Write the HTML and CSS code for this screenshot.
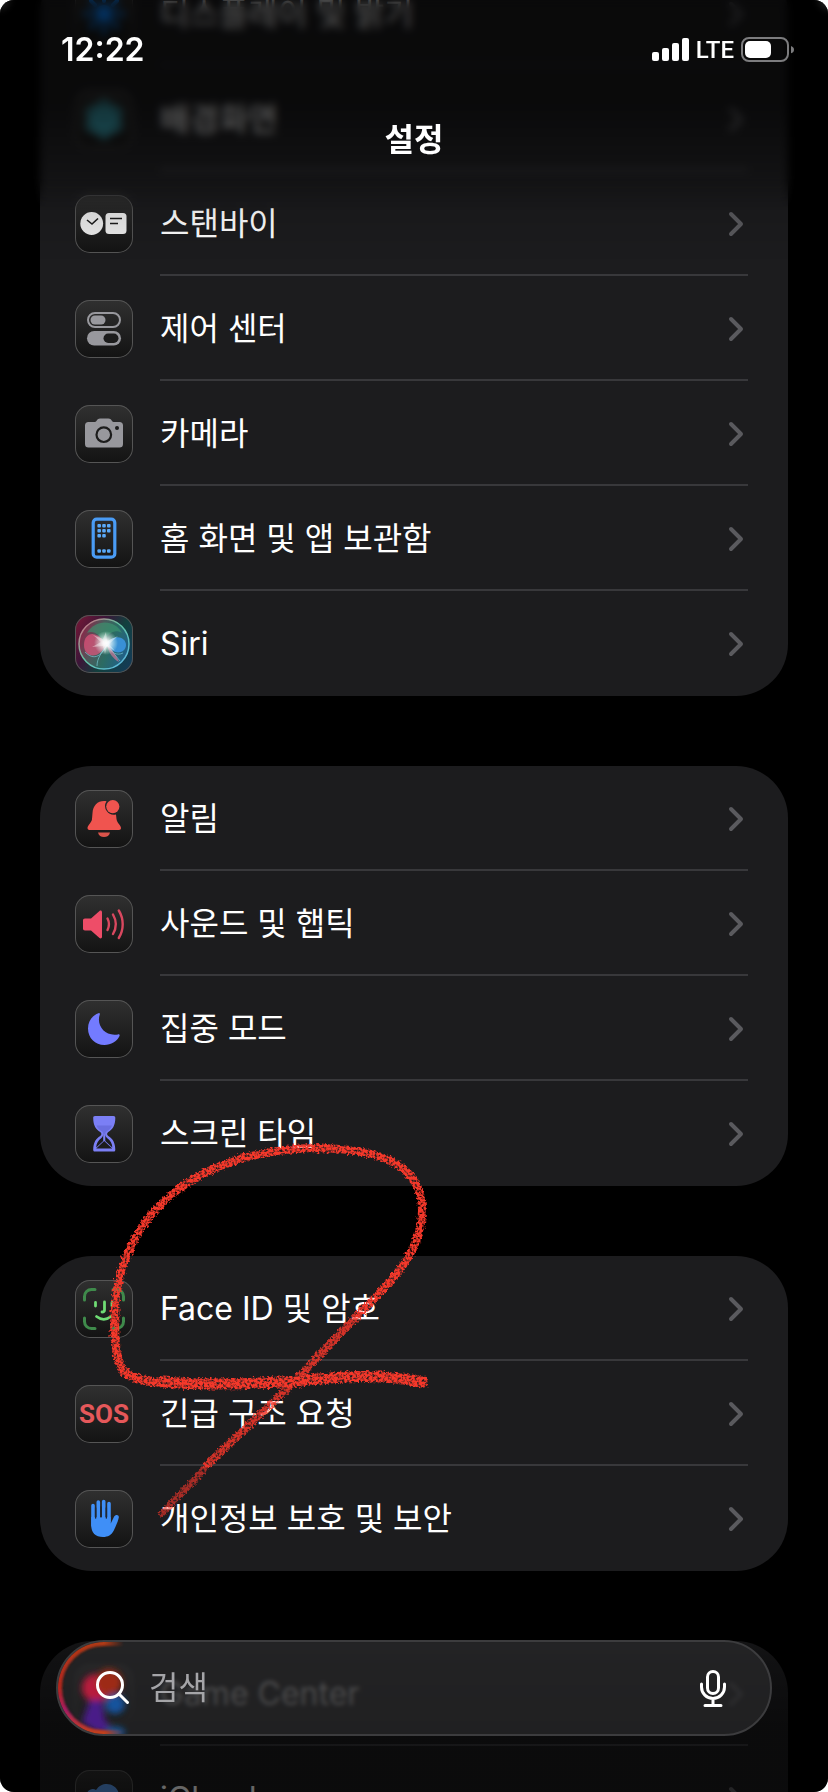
FILE: index.html
```html
<!DOCTYPE html>
<html lang="ko">

<head>
    <meta charset="UTF-8">
    <meta name="viewport" content="width=device-width, initial-scale=1">
    <title>설정</title>
    <link rel="stylesheet" href="styles.css">
</head>

<body>
    <div class="phone">
        <main class="list">
            <nav class="group">
                <a class="row" href="#display">
                    <svg class="icon" viewBox="0 0 58 58">
                        <circle cx="29" cy="29" r="9" fill="#0a84ff" />
                        <path d="M29 10v6M29 42v6M10 29h6M42 29h6M16 16l4 4M38 38l4 4M16 42l4-4M38 20l4-4" stroke="#0a84ff" stroke-width="4" stroke-linecap="round" />
                    </svg>
                    <span class="label">디스플레이 및 밝기</span>
                    <svg class="chevron" viewBox="0 0 18 28"><path d="M4 4l10 10L4 24" /></svg>
                </a>
                <a class="row" href="#wallpaper">
                    <svg class="icon" viewBox="0 0 58 58">
                        <g fill="#2fa8bd" fill-opacity="0.6" stroke="#5fd6e8" stroke-width="1">
                            <circle cx="29" cy="17" r="7" />
                            <circle cx="29" cy="41" r="7" />
                            <circle cx="18.500" cy="23" r="7" />
                            <circle cx="39.500" cy="23" r="7" />
                            <circle cx="18.500" cy="35" r="7" />
                            <circle cx="39.500" cy="35" r="7" />
                            <circle cx="29" cy="29" r="7" />
                        </g>
                    </svg>
                    <span class="label">배경화면</span>
                    <svg class="chevron" viewBox="0 0 18 28"><path d="M4 4l10 10L4 24" /></svg>
                </a>
                <a class="row" href="#standby">
                    <svg class="icon" viewBox="0 0 58 58">
                        <circle cx="16.700" cy="28.500" r="11.400" fill="#ececec" />
                        <path d="M12 25l5 4 6-5.500" fill="none" stroke="#1c1c1c" stroke-width="1.600" />
                        <rect x="30.500" y="18" width="21" height="21" rx="3.500" fill="#ececec" />
                        <path d="M35 23.500h12M35 28.500h8" stroke="#1c1c1c" stroke-width="1.600" />
                    </svg>
                    <span class="label">스탠바이</span>
                    <svg class="chevron" viewBox="0 0 18 28"><path d="M4 4l10 10L4 24" /></svg>
                </a>
                <a class="row" href="#control">
                    <svg class="icon" viewBox="0 0 58 58">
                        <rect x="13" y="13" width="32" height="14" rx="7" fill="none" stroke="#98989d" stroke-width="2" />
                        <rect x="15.500" y="15.500" width="15" height="9" rx="4.500" fill="#98989d" />
                        <rect x="12" y="31" width="34" height="14.500" rx="7.200" fill="#98989d" />
                        <rect x="28.500" y="33.500" width="15" height="9.500" rx="4.700" fill="#1c1c1c" />
                    </svg>
                    <span class="label">제어 센터</span>
                    <svg class="chevron" viewBox="0 0 18 28"><path d="M4 4l10 10L4 24" /></svg>
                </a>
                <a class="row" href="#camera">
                    <svg class="icon" viewBox="0 0 58 58">
                        <path d="M13.500 17H20c1.500 0 2-3.500 5-3.500h8.500c3 0 3.500 3.500 5 3.500H44.500a3.500 3.500 0 0 1 3.500 3.500v18.500a3.500 3.500 0 0 1-3.500 3.500h-31a3.500 3.500 0 0 1-3.500-3.500V20.500a3.500 3.500 0 0 1 3.500-3.500z" fill="#98989d" />
                        <circle cx="28.800" cy="29.700" r="7.300" fill="none" stroke="#1c1c1c" stroke-width="2.200" />
                        <circle cx="42" cy="23" r="2" fill="#1c1c1c" />
                    </svg>
                    <span class="label">카메라</span>
                    <svg class="chevron" viewBox="0 0 18 28"><path d="M4 4l10 10L4 24" /></svg>
                </a>
                <a class="row" href="#home">
                    <svg class="icon" viewBox="0 0 58 58">
                        <rect x="18.200" y="9.200" width="21.600" height="38" rx="3.500" fill="none" stroke="#4a9cf5" stroke-width="3.200" />
                        <g fill="#5aa9f8">
                            <rect x="22.400" y="14" width="3.600" height="3.600" rx="1" />
                            <rect x="27.200" y="14" width="3.600" height="3.600" rx="1" />
                            <rect x="32" y="14" width="3.600" height="3.600" rx="1" />
                            <rect x="22.400" y="19" width="3.600" height="3.600" rx="1" />
                            <rect x="27.200" y="19" width="3.600" height="3.600" rx="1" />
                            <rect x="32" y="19" width="3.600" height="3.600" rx="1" />
                            <rect x="22.400" y="24" width="3.600" height="3.600" rx="1" />
                            <rect x="27.200" y="24" width="3.600" height="3.600" rx="1" />
                            <rect x="22.400" y="39.200" width="3.600" height="3.600" rx="1" />
                            <rect x="27.200" y="39.200" width="3.600" height="3.600" rx="1" />
                            <rect x="32" y="39.200" width="3.600" height="3.600" rx="1" />
                        </g>
                    </svg>
                    <span class="label">홈 화면 및 앱 보관함</span>
                    <svg class="chevron" viewBox="0 0 18 28"><path d="M4 4l10 10L4 24" /></svg>
                </a>
                <a class="row" href="#siri">
                    <svg class="icon siri" viewBox="0 0 58 58">
                        <defs>
                            <linearGradient id="orb" x1="0" y1="0.300" x2="1" y2="0.700">
                                <stop offset="0" stop-color="#8d2448" />
                                <stop offset="0.350" stop-color="#4c5a5c" />
                                <stop offset="0.600" stop-color="#2c6b62" />
                                <stop offset="1" stop-color="#1f5f8e" />
                            </linearGradient>
                            <linearGradient id="rim" x1="0" y1="0" x2="1" y2="1">
                                <stop offset="0" stop-color="#e0607e" />
                                <stop offset="0.450" stop-color="#63c4a2" />
                                <stop offset="1" stop-color="#5ab4e8" />
                            </linearGradient>
                            <radialGradient id="glow">
                                <stop offset="0" stop-color="#ffffff" />
                                <stop offset="0.250" stop-color="#ffffff" stop-opacity="0.900" />
                                <stop offset="1" stop-color="#d8fff4" stop-opacity="0" />
                            </radialGradient>
                        </defs>
                        <circle cx="29" cy="29" r="25" fill="url(#orb)" stroke="url(#rim)" stroke-width="1.500" />
                        <path d="M12 18C20 4 40 4 47 18c-8-5-15 2-19 9-3-7-9-12-16-9z" fill="#3c9a72" opacity="0.600" />
                        <path d="M31 30C22 14 9 17 9 30s15 15 22 0z" fill="#f0557f" opacity="0.650" />
                        <path d="M31 29c8-11 20-7 20 1s-12 12-20-1z" fill="#3f9bee" opacity="0.800" />
                        <path d="M10 37c12 12 19-2 22-7 4 8 10 11 16 8M22 51c0-8 5-14 10-21l13 16" fill="none" stroke="#84d5e8" stroke-width="1" opacity="0.600" />
                        <path d="M32 29c4 5 10 12 12 18-6-3-11-10-12-18z" fill="#e77c9c" opacity="0.600" />
                        <circle cx="31" cy="28" r="12" fill="url(#glow)" />
                        <path d="M31 17l1 9 11-5-9 8 6 7-8-5-2 8-2-8-11 1 9-5-8-7 10 4z" fill="#ffffff" opacity="0.400" />
                    </svg>
                    <span class="label">Siri</span>
                    <svg class="chevron" viewBox="0 0 18 28"><path d="M4 4l10 10L4 24" /></svg>
                </a>
            </nav>

            <nav class="group">
                <a class="row" href="#notifications">
                    <svg class="icon" viewBox="0 0 58 58">
                        <path d="M29 11c-6.500 0-11 4.500-11.500 12l-.500 6c0 3-4.500 6.500-4.500 9 0 1.300.800 2 2 2h29.500c1.300 0 2-.800 2-2 0-2.500-4-5-4.500-9l-.500-4.500a8.800 8.800 0 0 1-9.500-13.300c-.800-.200-1.500-.200-2.500-.200z" fill="#f0544f" />
                        <circle cx="37.800" cy="16.600" r="6.600" fill="#f0544f" />
                        <path d="M23 42.500h12c-.500 3-3 4.500-6 4.500s-5.500-1.500-6-4.500z" fill="#d9534a" />
                    </svg>
                    <span class="label">알림</span>
                    <svg class="chevron" viewBox="0 0 18 28"><path d="M4 4l10 10L4 24" /></svg>
                </a>
                <a class="row" href="#sounds">
                    <svg class="icon" viewBox="0 0 58 58">
                        <path d="M10 23.500h6L24.500 16c1-.900 2.500-.400 2.500 1.200v24.600c0 1.600-1.500 2.100-2.500 1.200L16 35.500h-6c-1.300 0-2-.800-2-2v-8c0-1.200.700-2 2-2z" fill="#ee4d68" />
                        <path d="M32.500 23.500c1.800 3.500 1.800 8 0 11.500M38 19.500c3.500 6 3.500 13.500 0 19.500M43.800 15.500c5.200 8.500 5.200 19 0 27.500" fill="none" stroke="#d9485f" stroke-width="2.400" stroke-linecap="round" />
                    </svg>
                    <span class="label">사운드 및 햅틱</span>
                    <svg class="chevron" viewBox="0 0 18 28"><path d="M4 4l10 10L4 24" /></svg>
                </a>
                <a class="row" href="#focus">
                    <svg class="icon" viewBox="0 0 58 58">
                        <path d="M23.500 13.200c.900-.400 1.700.300 1.300 1.200-3.800 11 5.200 22.500 18.200 20 1.200-.200 2 .500 1.500 1.600C42 41.500 36 45 29.500 45 20 45 13 38 13 28.500c0-7 4-13 10.500-15.300z" fill="#737bff" />
                    </svg>
                    <span class="label">집중 모드</span>
                    <svg class="chevron" viewBox="0 0 18 28"><path d="M4 4l10 10L4 24" /></svg>
                </a>
                <a class="row" href="#screentime">
                    <svg class="icon" viewBox="0 0 58 58">
                        <path d="M20 11h18.500c1.200 0 1.800.700 1.800 1.900 0 7.500-2.800 11.500-7 14-1.600 1-1.600 3 0 4 4.200 2.500 7 6.500 7 13.800 0 1.200-.600 1.900-1.800 1.900H20c-1.200 0-1.800-.700-1.800-1.900 0-7.300 2.800-11.300 7-13.800 1.600-1 1.600-3 0-4-4.200-2.500-7-6.500-7-14 0-1.200.600-1.900 1.800-1.900z" fill="#7b7ff5" />
                        <path d="M21.500 20.500h15.500c-.800 2.200-2.200 4-4.500 5.200-1.700.900-2.200 2-2.200 3.500h-2c0-1.500-.500-2.600-2.200-3.500-2.300-1.200-3.800-3-4.600-5.200z" fill="#6a6ee0" />
                        <path d="M28.200 28.500v7.500l-7 6.500c0-4 2-7 5-9.300 1.500-1.200 2-2.700 2-4.700zM30.300 28.500v7.500l7 6.500c0-4-2-7-5-9.300-1.500-1.200-2-2.700-2-4.700z" fill="#1c1c1c" />
                        <path d="M29.200 36l8 7.500h-16z" fill="#1c1c1c" />
                    </svg>
                    <span class="label">스크린 타임</span>
                    <svg class="chevron" viewBox="0 0 18 28"><path d="M4 4l10 10L4 24" /></svg>
                </a>
            </nav>

            <nav class="group">
                <a class="row" href="#faceid">
                    <svg class="icon" viewBox="0 0 58 58">
                        <path d="M9.500 20v-3.500a7 7 0 0 1 7-7H20M38 9.500h3.500a7 7 0 0 1 7 7V20M48.500 38v3.500a7 7 0 0 1-7 7H38M20 48.500h-3.500a7 7 0 0 1-7-7V38" fill="none" stroke="#3f8a4b" stroke-width="3" stroke-linecap="round" />
                        <path d="M20.500 22.500v3.500M37 22.500v3.500M29.500 22v8c0 1.300-.800 2-2.500 2M21.500 36.500c4.500 3.500 10 3.500 14.500 0" fill="none" stroke="#6fdc74" stroke-width="2.800" stroke-linecap="round" />
                    </svg>
                    <span class="label">Face ID 및 암호</span>
                    <svg class="chevron" viewBox="0 0 18 28"><path d="M4 4l10 10L4 24" /></svg>
                </a>
                <a class="row" href="#sos">
                    <span class="icon sos">SOS</span>
                    <span class="label">긴급 구조 요청</span>
                    <svg class="chevron" viewBox="0 0 18 28"><path d="M4 4l10 10L4 24" /></svg>
                </a>
                <a class="row" href="#privacy">
                    <svg class="icon" viewBox="0 0 58 58">
                        <path d="M18 15.500v20M23.300 12v18M28.700 11.500v18M34 13.500v18" stroke="#3f8ff7" stroke-width="3.600" stroke-linecap="round" />
                        <path d="M16.200 27h19.500v6.500c1-1.500 2.300-4.500 3.300-6.700 1.600-2.800 5.300-2 4.800.700-.800 4-3 8.500-5 13C36.500 45 33 47 28 47c-7.500 0-11.800-4-11.800-12z" fill="#3f8ff7" />
                        <path d="M20.650 18v10M26 17v10M31.350 18v10" stroke="#1e2735" stroke-width="1.400" stroke-linecap="round" />
                    </svg>
                    <span class="label">개인정보 보호 및 보안</span>
                    <svg class="chevron" viewBox="0 0 18 28"><path d="M4 4l10 10L4 24" /></svg>
                </a>
            </nav>

            <nav class="group">
                <a class="row" href="#gamecenter">
                    <svg class="icon" viewBox="0 0 58 58"></svg>
                    <span class="label">Game Center</span>
                    <svg class="chevron" viewBox="0 0 18 28"><path d="M4 4l10 10L4 24" /></svg>
                </a>
                <a class="row" href="#icloud">
                    <svg class="icon" viewBox="0 0 58 58">
                        <path d="M14 44a10 10 0 0 1-3-19c2-6 7-7 10-5 7-11 23-6 23 6 9 4 7 18-4 18z" fill="#5a9cf0" />
                    </svg>
                    <span class="label">iCloud</span>
                    <svg class="chevron" viewBox="0 0 18 28"><path d="M4 4l10 10L4 24" /></svg>
                </a>
            </nav>
        </main>

        <header class="header">
            <div class="status">
                <time class="clock">12:22</time>
                <div class="signals">
                    <svg class="bars" viewBox="0 0 37 24">
                        <rect x="0" y="14" width="7" height="9" rx="2" />
                        <rect x="10" y="10" width="7" height="13" rx="2" />
                        <rect x="20" y="5" width="7" height="18" rx="2" />
                        <rect x="30" y="0" width="7" height="23" rx="2" />
                    </svg>
                    <span class="carrier">LTE</span>
                    <svg class="battery" viewBox="0 0 54 26">
                        <rect x="1" y="1" width="46" height="23" rx="7" fill="none" stroke="#7c7c7e" stroke-width="2" />
                        <rect x="4" y="4" width="26" height="17" rx="5" fill="#ffffff" />
                        <path d="M50 9c2 .700 3 2 3 3.700s-1 3-3 3.600z" fill="#7c7c7e" />
                    </svg>
                </div>
            </div>
            <h1 class="title">설정</h1>
        </header>

        <footer class="footer">
            <form class="search" role="search">
                <svg class="refraction" viewBox="0 0 80 96">
                    <defs>
                        <linearGradient id="edge" x1="0" y1="0" x2="0" y2="1">
                            <stop offset="0" stop-color="#b03a18" />
                            <stop offset="0.500" stop-color="#b3261e" />
                            <stop offset="0.750" stop-color="#a81d63" />
                            <stop offset="1" stop-color="#c2401c" />
                        </linearGradient>
                        <linearGradient id="fade">
                            <stop offset="0.600" stop-color="#ffffff" />
                            <stop offset="0.850" stop-color="#ffffff" stop-opacity="0" />
                        </linearGradient>
                        <mask id="edgeMask"><rect width="80" height="96" fill="url(#fade)" /></mask>
                        <filter id="soft" x="-50%" y="-50%" width="200%" height="200%"><feGaussianBlur stdDeviation="3" /></filter>
                        <filter id="softEdge"><feGaussianBlur stdDeviation="1" /></filter>
                    </defs>
                    <g filter="url(#soft)">
                        <circle cx="40" cy="48" r="14" fill="#b81c3c" />
                        <circle cx="53" cy="42" r="13" fill="#9d2a12" />
                        <circle cx="59" cy="64" r="10" fill="#14529c" />
                        <path d="M34 60h12l3 20 10 12H40L26 82z" fill="#4a1a88" />
                        <ellipse cx="59" cy="92" rx="10" ry="5" fill="#16589e" />
                    </g>
                    <g mask="url(#edgeMask)">
                        <path d="M70 3H48a45 45 0 0 0 0 90h22" fill="none" stroke="url(#edge)" stroke-width="6" filter="url(#softEdge)" />
                    </g>
                </svg>
                <svg class="glass" viewBox="0 0 36 36">
                    <circle cx="15" cy="15" r="12.500" />
                    <path d="M24 24l8.500 8.500" />
                </svg>
                <input class="field" type="search" placeholder="검색" aria-label="검색">
                <button class="mic" type="button" aria-label="받아쓰기">
                    <svg viewBox="0 0 28 40">
                        <rect x="8.500" y="3.500" width="11" height="22" rx="5.500" />
                        <path d="M2.500 16v3a11.500 11.500 0 0 0 23 0v-3M14 31v6M6 37.500h16" />
                    </svg>
                </button>
            </form>
        </footer>

        <!-- red crayon stroke around Face ID -->
        <svg class="scribble" viewBox="0 0 330 390" aria-hidden="true">
            <defs>
                <filter id="crayon" x="-10%" y="-10%" width="120%" height="120%">
                    <feTurbulence type="fractalNoise" baseFrequency="0.400" numOctaves="3" seed="4" result="noise" />
                    <feDisplacementMap in="SourceGraphic" in2="noise" scale="6" xChannelSelector="R" yChannelSelector="G" result="rough" />
                    <feColorMatrix in="noise" type="matrix" values="0 0 0 0 0  0 0 0 0 0  0 0 0 0 0  0 0 3 0 -0.600" result="grain" />
                    <feComposite in="rough" in2="grain" operator="in" result="chalk" />
                    <feGaussianBlur in="chalk" stdDeviation="0.400" />
                </filter>
            </defs>
            <g filter="url(#crayon)" fill="none" stroke="#f5372c" stroke-linecap="round">
                <path d="M62 373C82 352 96 340 107 325" stroke-width="7" opacity="0.650" />
                <path d="M107 325L188 248L260 173" stroke-width="8" opacity="0.850" />
                <path d="M260 173C290 143 322 113 322 70C322 30 290 8 213 8C140 10 90 35 60 65C30 95 16 135 15 170" stroke-width="8" />
                <path d="M15 170C14 195 15 225 26 233C36 240 48 242 63 242" stroke-width="9" />
                <path d="M63 242C110 246 160 243 200 241C240 237 270 233 323 242" stroke-width="11" />
            </g>
        </svg>
    </div>
</body>

</html>
```
FILE: styles.css
```css
* {
    box-sizing: border-box;
}

body {
    margin: 0;
    background-color: #fff;
    color: #fff;
    font-family: Inter, 'Noto Sans CJK KR', sans-serif;
}

.phone {
    position: relative;
    height: 100vh;
    overflow: hidden;
    background-color: #000;
    border-radius: 14px;
}

/* settings list, scrolled a little under the header */
.list {
    display: flex;
    flex-direction: column;
    gap: 70px;
    padding: 0 40px;
    margin-top: -39px;
}

.group {
    flex: none;
    overflow: hidden;
    background-color: #1c1c1e;
    border-radius: 52px;
}

.row {
    position: relative;
    display: flex;
    align-items: center;
    gap: 27px;
    height: 105px;
    padding: 0 43px 0 35px;
    color: inherit;
    text-decoration: none;
}

.row:not(:last-child)::after {
    content: '';
    position: absolute;
    right: 40px;
    bottom: 0;
    left: 120px;
    height: 2px;
    background-color: #38383b;
}

.icon {
    flex: none;
    width: 58px;
    height: 58px;
    border-radius: 15px;
    background-image: linear-gradient(#303030, #131313);
    box-shadow: inset 0 0 0 1px #555;
}

.siri {
    background-image: linear-gradient(120deg, #7c1836, #3b1538 35%, #12403e 60%, #143a5c);
}

.sos {
    display: flex;
    align-items: center;
    justify-content: center;
    color: #e5585a;
    font-family: 'Liberation Sans Narrow', Roboto, sans-serif;
    font-size: 26px;
    font-weight: 700;
}

.label {
    flex: 1;
    font-size: 32px;
    line-height: 40px;
}

.chevron {
    flex: none;
    width: 18px;
    height: 28px;
    fill: none;
    stroke: #5a5a5e;
    stroke-width: 4;
    stroke-linecap: round;
    stroke-linejoin: round;
}

/* header */
.header {
    position: absolute;
    top: 0;
    right: 0;
    left: 0;
    z-index: 1;
    height: 260px;
}

.header::before {
    content: '';
    position: absolute;
    inset: 0 0 50px;
    z-index: -1;
    backdrop-filter: blur(4px);
    -webkit-mask-image: linear-gradient(#000 85%, transparent);
    mask-image: linear-gradient(#000 85%, transparent);
}

.header::after {
    content: '';
    position: absolute;
    inset: 0;
    z-index: -1;
    background-image: linear-gradient(rgba(0, 0, 0, 0.64) 40%, rgba(0, 0, 0, 0.35) 67%, rgba(0, 0, 0, 0.1) 80%, transparent);
}

.status {
    display: flex;
    align-items: center;
    justify-content: space-between;
    padding: 30px 33px 0 61px;
}

.clock {
    font-size: 32px;
    font-weight: 600;
    line-height: 40px;
}

.signals {
    display: flex;
    align-items: center;
    gap: 7px;
}

.bars {
    width: 37px;
    height: 24px;
    fill: #fff;
}

.carrier {
    font-family: Roboto, sans-serif;
    font-size: 24px;
    font-weight: 500;
    line-height: 32px;
}

.battery {
    width: 54px;
    height: 26px;
}

.title {
    margin: 50px 0 0;
    font-size: 32px;
    font-weight: 600;
    line-height: 40px;
    text-align: center;
}

/* search bar */
.footer {
    position: absolute;
    right: 0;
    bottom: 0;
    left: 0;
    padding: 40px 56px 56px;
    background-image: linear-gradient(transparent, rgba(0, 0, 0, 0.4) 30%, rgba(0, 0, 0, 0.6) 65%);
}

.search {
    position: relative;
    display: flex;
    align-items: center;
    height: 96px;
    padding: 0 43px 0 37px;
    overflow: hidden;
    background-color: rgba(44, 44, 46, 0.65);
    border: 2px solid #3c3c3e;
    border-radius: 48px;
    backdrop-filter: blur(2px);
}

.refraction {
    position: absolute;
    top: -2px;
    left: -2px;
    width: 80px;
    height: 96px;
}

.glass {
    position: relative;
    width: 36px;
    height: 36px;
    fill: none;
    stroke: #fff;
    stroke-width: 3;
    stroke-linecap: round;
}

.field {
    flex: 1;
    min-width: 0;
    padding: 0 0 0 18px;
    color: #fff;
    background: none;
    border: none;
    outline: none;
    font-family: inherit;
    font-size: 32px;
    line-height: 40px;
}

.field::placeholder {
    color: #a5a5a8;
}

.mic {
    padding: 0;
    background: none;
    border: none;
}

.mic svg {
    display: block;
    width: 28px;
    height: 40px;
    fill: none;
    stroke: #fff;
    stroke-width: 3;
    stroke-linecap: round;
}

.scribble {
    position: absolute;
    top: 1140px;
    left: 100px;
    width: 330px;
    height: 390px;
    pointer-events: none;
}
```
